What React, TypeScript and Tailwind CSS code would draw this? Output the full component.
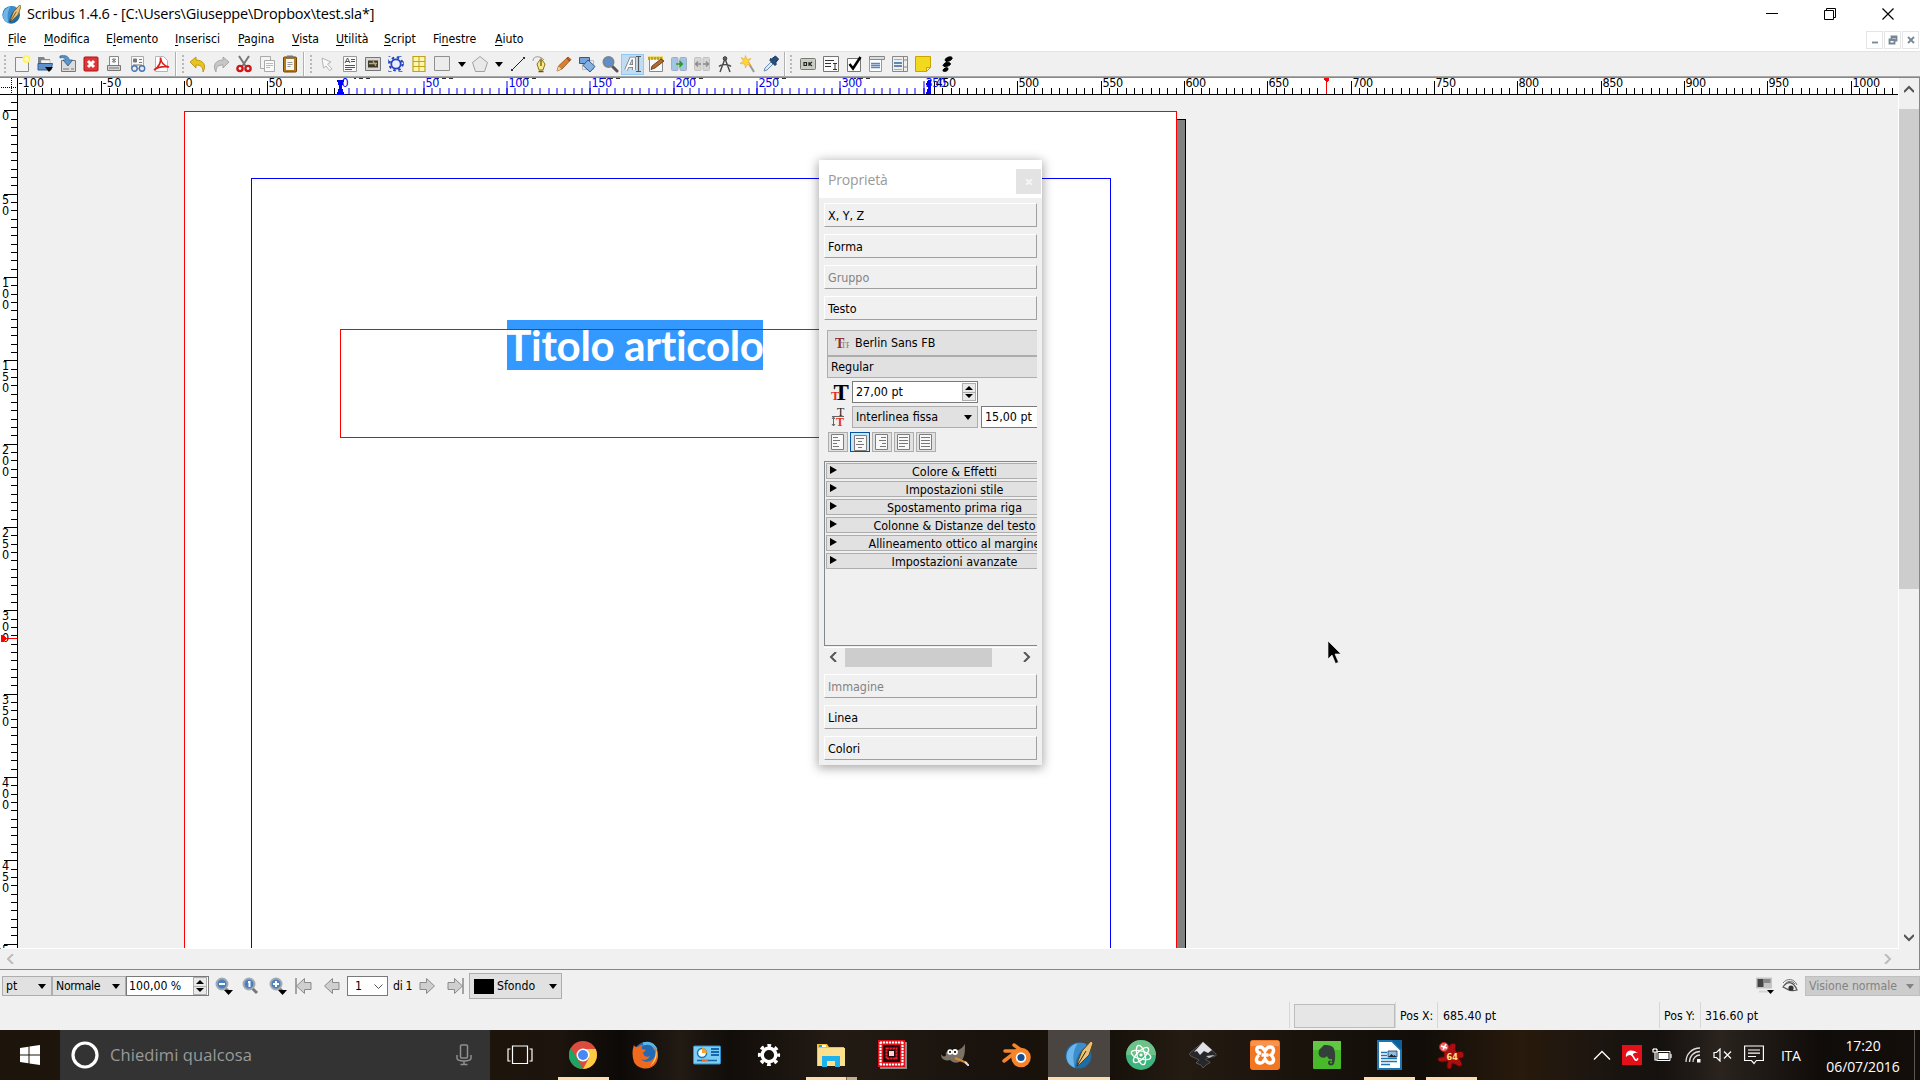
import React from "react";

type Kids = { children?: React.ReactNode };

const UI = "font-['DejaVu_Sans_Condensed','DejaVu_Sans',sans-serif] font-stretch-condensed";

function Ic({ children, w = 18, h = 18 }: Kids & { w?: number; h?: number }) {
  return (
    <svg width={w} height={h} viewBox={`0 0 ${w} ${h}`} fill="none" className="block shrink-0">
      {children}
    </svg>
  );
}

function Down({ className = "" }: { className?: string }) {
  return (
    <svg width="8" height="5" viewBox="0 0 8 5" className={`block shrink-0 ${className}`}>
      <path d="M0 0h8L4 5z" fill="currentColor" />
    </svg>
  );
}

function SpinButtons() {
  return (
    <div className="flex h-[18px] w-[14px] shrink-0 flex-col border border-[#adadad] bg-[#e9e9e9]">
      <div className="flex flex-1 items-center justify-center border-b border-[#adadad]">
        <Ic w={8} h={4}><path d="M0 4h8L4 0z" fill="#000" /></Ic>
      </div>
      <div className="flex flex-1 items-center justify-center">
        <Ic w={8} h={4}><path d="M0 0h8L4 4z" fill="#000" /></Ic>
      </div>
    </div>
  );
}

/* ---------- menu ---------- */
const menus: [string, string, string, string][] = [
  ["", "F", "ile", "w-[36px]"],
  ["", "M", "odifica", "w-[62px]"],
  ["E", "l", "emento", "w-[69px]"],
  ["", "I", "nserisci", "w-[63px]"],
  ["", "P", "agina", "w-[54px]"],
  ["", "V", "ista", "w-[44px]"],
  ["", "U", "tilità", "w-[48px]"],
  ["", "S", "cript", "w-[49px]"],
  ["Fi", "n", "estre", "w-[62px]"],
  ["", "A", "iuto", "w-[40px]"],
];

/* ---------- toolbar icons ---------- */
const fileIcons = [
  <Ic key="new"><path d="M2.5 2.5h13v14h-13z" fill="#f4f4f4" stroke="#8a8a8a" /><circle cx="13.500" cy="4" r="4" fill="#fff36b" /><circle cx="13.500" cy="4" r="2" fill="#fffbd0" /></Ic>,
  <Ic key="open"><path d="M2 2h6l1 2h5v10H2z" fill="#7d858c" /><path d="M5 5h9v5H5z" fill="#f5f5f5" stroke="#999" strokeWidth=".5" /><path d="M2 8.500h14.500l-1.500 6.500H2z" fill="#5f92cc" stroke="#2a5c99" /><path d="M9 12h8l-4 5z" fill="#000" /></Ic>,
  <Ic key="save"><path d="M2.500 5.500h14v11h-14z" fill="#dcdcdc" stroke="#777" /><path d="M1 1c5-1 9 0 9 4h3.500L9 11 4 5h2.500c0-2-2-3-5.500-2z" fill="#5e95c9" stroke="#2b5f94" strokeWidth=".8" /><path d="M4 14h6M12 14h3" stroke="#777" /></Ic>,
  <Ic key="close"><rect x="2" y="2" width="14" height="14" rx="1" fill="#e03535" stroke="#a81515" /><path d="M6 6l6 6M12 6l-6 6" stroke="#fff" strokeWidth="3" /></Ic>,
  <Ic key="print"><path d="M4.500 1.500h9v9h-9z" fill="#fafafa" stroke="#888" /><path d="M2.500 10.500h13v5h-13z" fill="#d4d4d4" stroke="#777" /><path d="M9 3v5M7 4l4 3M11 4L7 7M4 13h10" stroke="#777" /></Ic>,
  <Ic key="preflight"><path d="M2.500 1.500h12v12h-12z" fill="#f8f8f8" stroke="#aaa" /><path d="M4.500 4h3v3h-3zM10 4.500h3M10 7.500h3M4 10h9" stroke="#777" fill="#777" /><circle cx="5.500" cy="13.500" r="2.700" fill="#e3eefb" stroke="#4a74ad" strokeWidth="1.400" /><circle cx="13" cy="13.500" r="2.700" fill="#e3eefb" stroke="#4a74ad" strokeWidth="1.400" /></Ic>,
  <Ic key="pdf"><path d="M3.500 1.500h8l4 4v11h-12z" fill="#fff" stroke="#b5b5b5" /><path d="M2 15C7 12 9 7 8.500 2.500 9 8 12 11 17 12c-6-1-11 0-15 3z" stroke="#d9201a" strokeWidth="1.600" /></Ic>,
];
const editIcons = [
  <Ic key="undo"><path d="M1 7l6-5v3c7 0 11 5 7 12 0-5-2-7-7-7v3z" fill="#eac41d" stroke="#b08a00" strokeWidth=".8" /></Ic>,
  <Ic key="redo"><path d="M17 7l-6-5v3C4 5 0 10 4 17c0-5 2-7 7-7v3z" fill="#c6c6c6" stroke="#9a9a9a" strokeWidth=".8" /></Ic>,
  <Ic key="cut"><path d="M4 1l6.500 10M14 1L7.500 11" stroke="#777" strokeWidth="2" /><circle cx="5" cy="13.500" r="2.600" stroke="#cc1717" strokeWidth="2.400" /><circle cx="13" cy="13.500" r="2.600" stroke="#cc1717" strokeWidth="2.400" /></Ic>,
  <Ic key="copy"><path d="M2.500 1.500h10v12h-10z" fill="#f4f4f4" stroke="#aaa" /><path d="M6.500 5.500h10v11h-10z" fill="#fafafa" stroke="#aaa" /><path d="M8 8.500h7M8 10.500h7M8 12.500h4" stroke="#bbb" /></Ic>,
  <Ic key="paste"><rect x="2.500" y="2" width="13" height="15" rx="1" fill="#b3791c" stroke="#6b4509" /><path d="M5 4h8v11H5z" fill="#f6f6f2" /><path d="M6 .500h6v3H6z" fill="#777" /><path d="M6.500 7.500h5M6.500 9.500h5M6.500 11.500h3" stroke="#999" /></Ic>,
];
const toolIcons = [
  <Ic key="sel"><path d="M4 3l9 4-3.500 2 4.500 5-2.500 1.500L8 11l-2.500 2z" fill="#fafafa" stroke="#b5b5b5" /></Ic>,
  <Ic key="txt"><path d="M2.500 1.500h13v15h-13z" fill="#fafafa" stroke="#999" /><path d="M4 8l2.500-5L9 8M5 6.500h3M10 4.500h4M10 6.500h4M4 10.500h10M4 12.500h10M4 14.500h7" stroke="#555" /></Ic>,
  <Ic key="img"><path d="M1.500 2.500h15v13h-15z" fill="#d9d9d2" stroke="#777" /><path d="M4 5.500h10v7H4z" fill="#3d3a30" /><path d="M5 8.500h8M9 6l3 5" stroke="#c9a95c" strokeWidth="1.300" /></Ic>,
  <Ic key="render"><path d="M1.500 1.500h15v15h-15z" stroke="#5b72c9" strokeDasharray="4 7" strokeDashoffset="2" /><circle cx="9" cy="9" r="4.700" fill="#e8efff" stroke="#2743bd" strokeWidth="1.800" /><circle cx="9" cy="9" r="6.500" stroke="#2743bd" strokeWidth="2" strokeDasharray="2.500 2.600" /></Ic>,
  <Ic key="table"><path d="M3 1.500h12v15H3z" fill="#fff6b0" stroke="#c2a21a" strokeWidth="1.200" /><path d="M9 2v14M3 6.500h12M3 11.500h12" stroke="#c2a21a" /></Ic>,
  <Ic key="rect"><path d="M1.500 1.500h15v14h-15z" fill="#ececec" stroke="#909090" /></Ic>,
];
const toolIcons2 = [
  <Ic key="line"><path d="M3 15L15 3" stroke="#222" /><path d="M2 14h2v2H2zM14 2h2v2h-2z" fill="#333" /></Ic>,
  <Ic key="bez"><path d="M1 6c0-6 8-5 11-1" stroke="#999" /><path d="M9 3.500l4 5.500-2 6H7L5 9z" fill="#f7e88d" stroke="#8d7411" /><path d="M9 5v6M6.500 16.500h5" stroke="#6d5500" strokeWidth="1.300" /></Ic>,
  <Ic key="pencil"><path d="M2 16l1.500-5L13 2l3 2.500L7 14z" fill="#d9822b" stroke="#8d4c11" strokeWidth=".8" /><path d="M2 16l1.500-4.500L6.500 14z" fill="#f2d3a5" /><path d="M12 3l3 3" stroke="#aa3a3a" strokeWidth="1.500" /></Ic>,
  <Ic key="rot"><path d="M4.500 5.500h11v9h-11z" stroke="#bbb" /><path d="M1.500 2.500h10v6h-10z" fill="#75a4d8" stroke="#2c5a94" /><path d="M10 5l7 6.500-5 5.500-7-6.500z" fill="#86b1e1" stroke="#2c5a94" /></Ic>,
  <Ic key="zoom"><path d="M11 11l5 5" stroke="#555" strokeWidth="3" strokeLinecap="round" /><circle cx="7.500" cy="7" r="5" fill="#5c8fce" stroke="#7b8590" strokeWidth="2" /></Ic>,
];
const toolIcons3 = [
  <Ic key="story"><path d="M2.500 3.500h13v13h-13z" fill="#fafafa" stroke="#888" /><path d="M1 1.500h15v3H1z" fill="#e6cd28" /><path d="M2 2v3M5 2v3M8 2v3M11 2v3M14 2v3" stroke="#8d7a10" /><path d="M4 14.500l1-3.500 9-7 3 2-9 7z" fill="#b9692a" stroke="#503015" strokeWidth=".8" /></Ic>,
  <Ic key="link"><rect x="1.500" y="2.500" width="6.500" height="13" rx="1" fill="#a4c4e6" stroke="#9db0c2" /><rect x="10" y="2.500" width="6.500" height="13" rx="1" fill="#a4c4e6" stroke="#9db0c2" /><path d="M6 9h4M10 6.500L12.500 9 10 11.500z" stroke="#2f9a2b" strokeWidth="1.300" fill="#2f9a2b" /></Ic>,
  <Ic key="unlink"><rect x="1.500" y="2.500" width="6.500" height="13" rx="1" fill="#d6d6d6" stroke="#c2c2c2" /><rect x="10" y="2.500" width="6.500" height="13" rx="1" fill="#d6d6d6" stroke="#c2c2c2" /><path d="M3 9h5M10 9h5M5 6.500L2.500 9 5 11.500M13 6.500l2.500 2.500-2.500 2.500" stroke="#8a8a8a" strokeWidth="1.300" /></Ic>,
  <Ic key="compass"><circle cx="9" cy="3.500" r="1.800" fill="#666" stroke="#333" /><path d="M8.500 5L4 17M9.500 5L14 17M3 11.500c2-2.500 10-2.500 12 0" stroke="#444" strokeWidth="1.400" /></Ic>,
  <Ic key="wand"><path d="M9 7l6 10" stroke="#999" strokeWidth="2" /><path d="M6.500.500l1.500 4 4-1-3 3.500 3 3-4-.500L6.500 13 5.500 9 1 8.500 4.500 6 2 2.500 5.500 4z" fill="#ffd633" stroke="#e8a83c" strokeWidth=".6" /></Ic>,
  <Ic key="drop"><path d="M2 16l1-3 6-6 2 2-6 6z" fill="#dceafa" stroke="#6a8db5" /><path d="M8 5.500l5 5 1.500-1.500-1-1 3-4-3-3-4 3-1-.500z" fill="#23507f" stroke="#16324f" /></Ic>,
];
const pdfIcons = [
  <Ic key="ok"><rect x="1.500" y="3.500" width="15" height="11" rx="1" fill="#c9ccc5" stroke="#777b72" /><path d="M5 7.500h2.500v3H5zM10 7v4M13 7l-2.500 2L13 11" stroke="#222" strokeWidth="1.200" /></Ic>,
  <Ic key="field"><path d="M1.500 1.500h15v15h-15z" fill="#fbfbfb" stroke="#777" /><path d="M3 5.500h9M3 8.500h6M3 11.500h6M11 8.500h4M11 14.500h4M13 8.500v6" stroke="#333" /></Ic>,
  <Ic key="check"><path d="M2.500 3.500h13v13h-13z" fill="#fff" stroke="#777" /><path d="M4.500 9l3.500 4.500L15.500 2" stroke="#000" strokeWidth="2.500" /></Ic>,
  <Ic key="combo"><path d="M1.500 3.500h12v13h-12z" fill="#fff" stroke="#999" /><path d="M1.500 1.500h15v3h-15z" fill="#ddd" stroke="#888" /><path d="M3 8.500h9M3 10.500h9M3 12.500h9" stroke="#5f87bb" strokeWidth="1.500" /></Ic>,
  <Ic key="list"><path d="M1.500 1.500h15v15h-15z" fill="#eee" stroke="#888" /><path d="M12.500 1.500v15M13 5h4M13 12h4" stroke="#888" /><path d="M3 4.500h8M3 14.500h8" stroke="#aaa" /><path d="M3 8h8M3 11h8" stroke="#5f87bb" strokeWidth="2" /></Ic>,
  <Ic key="note"><path d="M1.500 1.500h15v11l-4 4h-11z" fill="#f2d91d" stroke="#c9a300" /><path d="M12.500 16.500v-4h4z" fill="#fff08a" stroke="#c9a300" /></Ic>,
  <Ic key="feet"><path d="M7 5c1-3 6-4 7-2.500s-2 4-6 4zM5 10.500c1-3 5-4 7-2.500s-2 4-6 3.500zM5 15c2-3 5-3 5-1s-3 3-5 2z" fill="#000" stroke="#000" /></Ic>,
];

function Slots({ icons, className = "" }: { icons: React.ReactNode[]; className?: string }) {
  return (
    <div className={`flex shrink-0 ${className}`}>
      {icons.map((ic, i) => (
        <div key={i} className="flex h-6 w-[23.1px] shrink-0 items-center justify-center">{ic}</div>
      ))}
    </div>
  );
}

function Handle() {
  return (
    <div className="flex w-[6px] shrink-0 flex-col items-center gap-[2px]">
      {[0, 1, 2, 3, 4].map((i) => <span key={i} className="size-[2px] bg-[#b8b8b8]" />)}
    </div>
  );
}

function Sep() {
  return <div className="h-6 w-[2px] shrink-0 border-l border-[#b0b0b0] bg-white" />;
}

function Toolbar() {
  return (
    <div className="flex h-[25px] items-center border-t border-[#e3e3e3] bg-[#f0f0f0] pl-[2px]">
      <Handle />
      <Slots icons={fileIcons} className="ml-[2.5px] w-[164px]" />
      <Sep />
      <div className="ml-[3px]"><Handle /></div>
      <Slots icons={editIcons} className="ml-[1px] w-[116.500px]" />
      <Sep />
      <div className="ml-[3px]"><Handle /></div>
      <Slots icons={toolIcons} className="ml-[1px] w-[142px]" />
      <Down className="ml-[1px]" />
      <div className="ml-[5px]">
        <Ic><path d="M9 1.500l7.500 6-3 9h-9l-3-9z" fill="#e9e9e9" stroke="#a0a0a0" /></Ic>
      </div>
      <Down className="ml-[6px]" />
      <Slots icons={toolIcons2} className="ml-[3px]" />
      <div className="flex h-[21px] w-[23px] shrink-0 items-center justify-center border border-[#90c8f6] bg-[#c0dcf3]">
        <Ic><path d="M2 15L7 3.500h3V15M4.500 11H9" stroke="#777" strokeWidth="3.500" /><path d="M2 15L7 3.500h3V15M4.500 11H9" stroke="#f8f8f8" strokeWidth="2" /><path d="M12 1.500h5M14.500 2v14M12 16.500h5" stroke="#555" strokeWidth="1.200" /></Ic>
      </div>
      <Slots icons={toolIcons3} className="w-[139.500px]" />
      <Sep />
      <div className="ml-[2px]"><Handle /></div>
      <Slots icons={pdfIcons} className="ml-[2.5px]" />
    </div>
  );
}

/* ---------- rulers ---------- */
const K = 5 / 3;
const range = (a: number, b: number, s: number) => {
  const r: number[] = [];
  for (let v = a; v <= b; v += s) r.push(v);
  return r;
};

function HRuler() {
  const x = (v: number) => Math.floor(184.4 + v * K);
  const bx = (v: number) => Math.floor(339.7 + v * K);
  const black = range(-100, 1025, 5).filter((v) => x(v) < 338 || x(v) > 930);
  return (
    <svg width="1899" height="17" viewBox="0 78 1899 17" className={`block bg-white ${UI}`} fontSize="12.500" shapeRendering="crispEdges">
      <path d="M1 87.500h16M11.500 78v16" stroke="#000" strokeDasharray="1 1" />
      <path d="M17.500 78v17M0 94.500h1898" stroke="#000" />
      {black.map((v) => (
        <rect key={v} x={x(v)} y={v % 50 ? 88 : 81} width="1" height={v % 50 ? 6 : 13} fill="#000" />
      ))}
      {black.filter((v) => v % 50 === 0).map((v) => (
        <text key={v} x={x(v) + 1.5} y="87" fill="#000" textLength={String(v).replace("-", "").length * 6.900 + (v < 0 ? 5 : 0)}>{v}</text>
      ))}
      {range(100, 400, 50).map((v) => (
        <path key={v} d={`M${x(v) + 3} 78.500h2m3 0h4m3 0h4`} stroke="#333" />
      ))}
      {range(5, 350, 5).map((v) => (
        <g key={v} fill="#8080ff">
          <rect x={bx(v)} y={v % 50 ? 88 : 81} width="2" height={v % 50 ? 6 : 13} />
          {v % 50 === 0 && <rect x={bx(v)} y="88" width="2" height="6" fill="#3838ff" />}
        </g>
      ))}
      {range(0, 350, 50).map((v) => (
        <text key={v} x={bx(v) + 2.5} y="87" fill="#0000ee" textLength={String(v).length * 6.900}>{v}</text>
      ))}
      <path d="M337 80h7l-3 7 3 7h-7l3-7z" fill="#0000ff" stroke="#0000ff" />
      <path d="M931 80h-3l-2 4 2 4-2 6h5z" fill="#0000ff" />
      <path d="M1324 78h5v2l-2 2v12h-1v-12l-2-2z" fill="#f00" />
    </svg>
  );
}

function VRuler() {
  const y = (v: number) => Math.floor(110.700 + v * K);
  return (
    <svg width="18" height="853" viewBox="0 95 18 853" className={`block shrink-0 bg-white ${UI}`} fontSize="12.500" shapeRendering="crispEdges">
      <path d="M17.500 95v854" stroke="#000" />
      {range(-5, 500, 5).map((v) => (
        <rect key={v} x={v % 50 ? 11 : 4} y={y(v)} width={v % 50 ? 6 : 13} height="1" fill="#000" />
      ))}
      {range(0, 500, 50).map((v) =>
        String(v).split("").map((d, i) => (
          <text key={`${v}-${i}`} x="2" y={y(v) + 9.500 + i * 11} textLength="7">{d}</text>
        ))
      )}
      <path d="M1 635h2l3 3h11v1H6l-3 3H1z" fill="#f00" />
    </svg>
  );
}

/* ---------- document canvas ---------- */
function Canvas() {
  return (
    <div className="relative h-[853px] w-[1880px] overflow-hidden bg-[#f0f0f0]">
      <div className="absolute left-[1158px] top-[24px] h-[840px] w-[10px] border border-black bg-[#808080]" />
      <div className="absolute left-[166px] top-[16px] h-[850px] w-[993px] border border-[#ff0000] bg-white" />
      <div className="absolute left-[233px] top-[83px] h-[800px] w-[860px] border border-[#0000ff]" />
      <div className="absolute left-[489px] top-[225px] flex h-[50px] w-[256px] items-center justify-center whitespace-nowrap bg-[#3399ff] font-['Lato',sans-serif] text-[42px] font-bold text-white">
        <span className="tracking-[-0.3px]">Titolo articolo</span>
      </div>
      <div className="absolute left-[322px] top-[234px] h-[109px] w-[600px] border border-[#ff0000]" />
      <svg width="14" height="24" viewBox="0 0 14 24" className="absolute left-[1310px] top-[546px]">
        <path d="M0 0v18l4-4 3.500 8.500 3-1.200L7 13h6z" fill="#000" stroke="#fff" strokeWidth=".6" />
      </svg>
    </div>
  );
}

/* ---------- properties palette ---------- */
function Section({ children, off = false, className = "" }: Kids & { off?: boolean; className?: string }) {
  return (
    <div className={`flex h-6 items-center border border-b-[#a0a0a0] border-l-white border-r-[#a0a0a0] border-t-white pl-[3px] pt-[2px] ${off ? "text-[#838383]" : ""} ${className}`}>
      {children}
    </div>
  );
}

const alignLines = [
  "M5 5.500h5M5 8.500h7M5 11.500h4M5 14.500h6",
  "M6 6.500h8M8 9.500h4M6 12.500h8M8 15.500h4",
  "M9 5.500h5M7 8.500h7M10 11.500h4M8 14.500h6",
  "M5 5.500h9M5 8.500h9M5 11.500h9M5 14.500h6",
  "M5 5.500h9M5 8.500h9M5 11.500h9M5 14.500h9",
];

function Palette() {
  return (
    <div className={`absolute left-[819px] top-[160px] flex h-[605px] w-[223px] flex-col bg-[#f0f0f0] pb-[4px] text-[12.4px] text-black shadow-[0_2px_10px_1px_rgba(0,0,0,0.35)] ${UI}`}>
      <div className="flex h-[38px] shrink-0 justify-between bg-white pl-[9px] pr-px pt-[9px] font-['Open_Sans',sans-serif] text-[14px] font-stretch-normal text-[#999]">
        <span className="tracking-[-0.15px]">Proprietà</span>
        <span className="flex h-[25px] w-[25px] items-center justify-center bg-[#e3e3e3]">
          <Ic w={8} h={6}><path d="M1 0l6 6M7 0L1 6" stroke="#f7f7f7" strokeWidth="1.800" /></Ic>
        </span>
      </div>
      <div className="flex flex-col gap-[7px] pl-[5px] pr-[5px] pt-[5px]">
        <Section>X, Y, Z</Section>
        <Section>Forma</Section>
        <Section off>Gruppo</Section>
        <Section>Testo</Section>
      </div>
      <div className="mr-[5px] mt-[10px] flex h-[123px] shrink-0 flex-col overflow-hidden pl-[8px]">
        <div className="flex h-[26px] shrink-0 items-center border border-r-0 border-[#adadad] bg-[#e1e1e1] pl-[7px]">
          <Ic w={14} h={14}>
            <text x="0" y="12" fontSize="14" fill="#8d3030" className="font-['Liberation_Serif',serif] font-bold">T</text>
            <text x="6" y="12" fontSize="8" fill="#777" className="font-['Liberation_Serif',serif]">TF</text>
          </Ic>
          <span className="ml-[6px] pt-px">Berlin Sans FB</span>
        </div>
        <div className="flex h-[22px] shrink-0 items-center border border-r-0 border-[#adadad] bg-[#e1e1e1] pl-[3px] pt-px">Regular</div>
        <div className="mt-[3px] flex h-[22px] shrink-0 items-center">
          <div className="flex w-[25px] justify-center">
            <Ic w={20} h={20}>
              <text x="3.500" y="18" fontSize="23" fill="#000" className="font-['Liberation_Serif',serif] font-bold">T</text>
              <text x="1" y="18" fontSize="13" fill="#e5301c" className="font-['Liberation_Serif',serif] font-bold">T</text>
            </Ic>
          </div>
          <div className="flex h-[22px] w-[126px] items-center justify-between border border-[#7a7a7a] bg-white pl-[3px] pr-px">
            <span className="pt-px">27,00 pt</span><SpinButtons />
          </div>
        </div>
        <div className="mt-[3px] flex h-[22px] shrink-0 items-center">
          <div className="flex w-[25px] justify-center">
            <Ic w={18} h={20}>
              <path d="M1 9.500h12M2.500 10v9M1 12l1.500-2L4 12M1 17l1.500 2L4 17" stroke="#666" />
              <text x="6" y="9" fontSize="12" fill="#222" className="font-['Liberation_Serif',serif]">T</text>
              <text x="5" y="19" fontSize="12" fill="#e5301c" className="font-['Liberation_Serif',serif] font-bold">T</text>
            </Ic>
          </div>
          <div className="flex h-[22px] w-[126px] items-center justify-between border border-[#adadad] bg-[#e1e1e1] pl-[3px] pr-[5px]">
            <span className="pt-px">Interlinea fissa</span><Down />
          </div>
          <div className="ml-[3px] flex h-[22px] w-[56px] shrink-0 items-center whitespace-nowrap border border-r-0 border-[#7a7a7a] bg-white pl-[3px] pt-px">15,00 pt</div>
        </div>
        <div className="ml-px mt-[4px] flex shrink-0 gap-[2px]">
          {alignLines.map((d, i) => (
            <div key={i} className={`h-5 w-5 border ${i === 1 ? "border-[#0054a0] bg-[#cce4f7]" : "border-[#adadad] bg-[#e1e1e1]"}`}>
              <svg width="18" height="18" viewBox="1 1 18 18">
                <path d={i === 1 ? "M4.500 3.500h12v15h-12z" : "M3.500 2.500h12v15h-12z"} fill="#f8f8f8" stroke="#7d7d7d" />
                <path d={d} stroke="#777" />
              </svg>
            </div>
          ))}
        </div>
      </div>
      <div className="ml-[5px] mr-[5px] mt-[8px] flex h-[185px] shrink-0 flex-col gap-[2px] overflow-hidden border border-r-0 border-[#828790] pl-px pt-px">
        {["Colore & Effetti", "Impostazioni stile", "Spostamento prima riga", "Colonne & Distanze del testo", "Allineamento ottico al margine", "Impostazioni avanzate"].map((t) => (
          <div key={t} className="flex h-4 w-[256px] shrink-0 items-center border border-[#adadad] bg-[#e1e1e1] pl-[3px]">
            <Ic w={7} h={10}><path d="M0 0l7 4-7 4z" fill="#000" /></Ic>
            <span className="flex w-[235px] justify-center whitespace-nowrap pt-[2px]">{t}</span>
          </div>
        ))}
      </div>
      <div className="ml-[5px] mr-[5px] mt-px flex h-[19px] shrink-0 items-center border-t border-white">
        <div className="flex w-[21px] justify-center pr-[3px]"><Ic w={8} h={10}><path d="M7 0L2 5l5 5" stroke="#555" strokeWidth="2" /></Ic></div>
        <div className="h-[19px] w-[147px] bg-[#cdcdcd]" />
        <div className="ml-[31px]"><Ic w={8} h={10}><path d="M1 0l5 5-5 5" stroke="#555" strokeWidth="2" /></Ic></div>
      </div>
      <div className="mt-[8px] flex flex-col gap-[7px] px-[5px]">
        <Section off>Immagine</Section>
        <Section>Linea</Section>
        <Section>Colori</Section>
      </div>
    </div>
  );
}

/* ---------- status bar ---------- */
function Lens({ mark, arrow }: { mark: string; arrow?: boolean }) {
  return (
    <Ic w={18} h={18}>
      <path d="M10 11l5 5" stroke="#777" strokeWidth="3" />
      <circle cx="7" cy="7" r="5.500" fill="#4a7fc0" stroke="#a2aab2" strokeWidth="2" />
      <path d={mark} stroke="#fff" strokeWidth="2" />
      {arrow && <path d="M9 13h9l-4.500 5z" fill="#000" />}
    </Ic>
  );
}

function PageArrow({ flip, bar }: { flip?: boolean; bar?: boolean }) {
  return (
    <svg width="17" height="18" viewBox="0 0 17 18" className={`block shrink-0 ${flip ? "-scale-x-100" : ""}`}>
      <path d="M1.500 9l8-7.500v4h6.500v7H9.500v4z" fill="#cfcfcf" stroke="#8a8a8a" />
      {bar && <path d="M1 1v16" stroke="#8a8a8a" strokeWidth="1.500" />}
    </svg>
  );
}

function StatusBar() {
  return (
    <div className={`flex h-[60px] flex-col bg-[#f0f0f0] text-[12.2px] text-black ${UI}`}>
      <div className="flex h-[32px] items-center pl-[2px]">
        <div className="flex h-5 w-[50px] items-center justify-between border border-[#adadad] bg-[#e1e1e1] pl-[3px] pr-[5px]"><span className="pt-px">pt</span><Down /></div>
        <div className="flex h-5 w-[74px] items-center justify-between border border-[#adadad] bg-[#e1e1e1] pl-[3px] pr-[5px]"><span className="pt-px tracking-[-0.3px]">Normale</span><Down /></div>
        <div className="flex h-5 w-[83px] items-center justify-between border border-[#7a7a7a] bg-white pl-[2px] pr-px"><span className="pt-px">100,00 %</span><SpinButtons /></div>
        <div className="ml-[6px]"><Lens mark="M4 7h6" arrow /></div>
        <div className="ml-[9px]"><Lens mark="M7.500 4v6M6 5h2" /></div>
        <div className="ml-[9px]"><Lens mark="M4 7h6M7 4v6" arrow /></div>
        <div className="ml-[8px]"><PageArrow bar /></div>
        <div className="ml-[11px]"><PageArrow /></div>
        <div className="ml-[7px] flex h-5 w-[41px] items-center justify-between border border-[#7a7a7a] bg-white pl-[7px] pr-[4px]">
          <span className="pt-px">1</span><Ic w={9} h={5}><path d="M.5.500l4 4 4-4" stroke="#555" /></Ic>
        </div>
        <span className="ml-[5px] w-[20px] whitespace-nowrap pt-px tracking-[-0.3px]">di 1</span>
        <div className="ml-[6px]"><PageArrow flip /></div>
        <div className="ml-[11px]"><PageArrow flip bar /></div>
        <div className="ml-[5px] flex h-[26px] w-[93px] items-center border border-[#adadad] bg-[#e1e1e1] pl-[4px]">
          <span className="mr-[3px] h-[15px] w-[20px] bg-black" /><span className="pt-px">Sfondo</span><Down className="ml-auto mr-[4px]" />
        </div>
        <div className="ml-auto mr-[7px]">
          <Ic w={19} h={18}><path d="M0 .5h16v11H0z" fill="#c4c4c4" /><path d="M1.500 2h6v8h-6z" fill="#444" /><path d="M7.500 2h7v4h-7z" fill="#888" /><path d="M3 14.500h9" stroke="#d5d5d5" strokeWidth="2" /><path d="M11 13h7l-3.500 4z" fill="#000" /></Ic>
        </div>
        <div className="mr-[6px]">
          <Ic w={17} h={16}><path d="M1 9c5-7 11-5 14 3-4 1-8 1-12-2z" fill="#eee" stroke="#555" strokeWidth="1.200" /><circle cx="9" cy="10" r="2.600" fill="#333" /><path d="M1 5C5 0 12 0 15 7M3 6c3-4 8-3 10 0" stroke="#777" /></Ic>
        </div>
        <div className="flex h-5 w-[115px] items-center justify-between border border-[#bfbfbf] bg-[#cccccc] pl-[3px] pr-[5px] text-[#838383]"><span className="pt-px">Visione normale</span><Down /></div>
      </div>
      <div className="flex h-[26px] items-center pl-[1289px]">
        <div className="h-full w-[5px] shrink-0 border-l border-[#d7d7d7]" />
        <div className="mt-[2px] h-[24px] w-[101px] shrink-0 border border-[#bcbcbc] bg-[#e6e6e6]" />
        <div className="flex h-full w-[42px] items-center whitespace-nowrap border-l border-[#d7d7d7] pl-[4px] pt-[3px]">Pos X:</div>
        <div className="flex h-full w-[222px] items-center border-l border-[#d7d7d7] pl-[5px] pt-[3px]">685.40 pt</div>
        <div className="flex h-full w-[41px] items-center whitespace-nowrap border-l border-[#d7d7d7] pl-[4px] pt-[3px]">Pos Y:</div>
        <div className="flex h-full items-center border-l border-[#d7d7d7] pl-[4px] pt-[3px]">316.60 pt</div>
      </div>
    </div>
  );
}

/* ---------- taskbar ---------- */
const Chrome = (
  <Ic w={28} h={28}>
    <circle cx="14" cy="14" r="14" fill="#dd4b3e" />
    <path d="M1.800 7L9 19l5 9A14 14 0 0 1 1.800 7z" fill="#1da362" />
    <path d="M14 8h12.600A14 14 0 0 1 14 28l6-11z" fill="#ffcd42" />
    <circle cx="14" cy="14" r="6.500" fill="#fff" /><circle cx="14" cy="14" r="5" fill="#4688f4" />
  </Ic>
);
const Firefox = (
  <Ic w={28} h={28}>
    <circle cx="15" cy="13" r="12" fill="#2469b3" /><path d="M12 3c6-2 11 0 13 6" stroke="#59b7e8" strokeWidth="3" />
    <path d="M3 4c1 2 2 2 4 2 2-2 4-2 5-2-1 2-2 3-1 4l4 1-3 3 1 2c1 2 4 2 6 1-2 4-6 5-9 3 3 4 11 4 14-3 1-4 0-8-3-11 6 4 8 11 4 18-5 8-18 7-22-1C1 15 1 9 3 4z" fill="#ee6a1f" />
    <path d="M25 8c2 6 0 13-6 17 5-6 6-11 6-17z" fill="#ffd35c" />
  </Ic>
);
const Card = (
  <Ic w={28} h={20}>
    <rect x=".5" y="1" width="27" height="18" rx="1" fill="#7dcdf5" stroke="#2d8fc9" />
    <circle cx="9" cy="8" r="4.500" fill="#fff" stroke="#1e78b9" strokeWidth="1.500" /><path d="M9 8V3a5 5 0 0 1 5 5z" fill="#f5a623" />
    <path d="M18 4h8M18 7h8M18 10h8" stroke="#1668ab" strokeWidth="2" /><path d="M4 15.500h20" stroke="#1668ab" strokeWidth="1.500" /><path d="M9 15.500h6" stroke="#f07020" strokeWidth="1.500" />
  </Ic>
);
const Gear = (
  <Ic w={24} h={24}>
    <circle cx="12" cy="12" r="6.800" stroke="#fff" strokeWidth="3.400" />
    <circle cx="12" cy="12" r="9.600" stroke="#fff" strokeWidth="3" strokeDasharray="3.770 3.770" strokeDashoffset="1.900" />
  </Ic>
);
const Folder = (
  <Ic w={28} h={26}>
    <path d="M0 2h10l2 3h15v19H0z" fill="#f0bf3f" /><path d="M1 6h27v18H1z" fill="#fde08d" /><path d="M2 3h7v2H2z" fill="#fff" /><path d="M2 3h3v2H2z" fill="#1d9be0" />
    <path d="M5 25V14h18v11h-5v-6h-8v6z" fill="#1db2ee" />
  </Ic>
);
const RedGrid = (
  <Ic w={29} h={29}>
    <path d="M2 2h27v27H2z" fill="#888" /><path d="M0 0h27v27H0z" fill="#e0101a" />
    <path d="M2 2.500h23M2 24.500h23M2.500 2v23M24.500 2v23" stroke="#fff" strokeWidth="2.200" strokeDasharray="2.200 .8" />
    <path d="M5 5h17v17H5z" fill="#25060a" /><path d="M8.500 8.500h10v10h-10z" stroke="#f3242c" strokeWidth="2" strokeDasharray="2.300 .7" /><path d="M11 11h5v5h-5z" fill="#ffd2d2" />
  </Ic>
);
const Gimp = (
  <Ic w={28} h={22}>
    <path d="M3 10c4-3 6-3 9-3 4 0 8-1 12-7 0 7 0 12-3 16-4 4-9 3-12 0-3 1-7 0-8-2-2-3 0-4 2-4z" fill="#7b7265" />
    <circle cx="9" cy="8" r="2.700" fill="#fff" /><circle cx="14" cy="8" r="2.900" fill="#fff" /><circle cx="9" cy="8" r="1" fill="#000" /><circle cx="14" cy="8" r="1.100" fill="#000" />
    <circle cx="3" cy="10.500" r="2" fill="#111" /><path d="M14 14l12 5" stroke="#d9892e" strokeWidth="2" /><path d="M24 18l4 4" stroke="#ddd" strokeWidth="2" />
  </Ic>
);
const Blender = (
  <Ic w={30} h={26}>
    <path d="M2 19L15 9M3 9h14M12 3l11 8" stroke="#f5842a" strokeWidth="3.500" strokeLinecap="round" />
    <circle cx="19" cy="15.500" r="7.500" fill="#fff" stroke="#f5842a" strokeWidth="4.500" /><circle cx="19" cy="15.500" r="3.600" fill="#164f91" />
  </Ic>
);

function ScribusIcon({ size }: { size: number }) {
  return (
    <svg width={size} height={size} viewBox="0 0 28 28" className="block shrink-0" fill="none">
      <circle cx="13.500" cy="14.500" r="13" fill="#1c6ca8" /><path d="M13 2C4 4 0 12 2 19c1 4 4 6 8 8-2-8-1-17 3-25z" fill="#6fb5ea" />
      <path d="M13 2c6-1 9 1 9 3-8 5-11 12-12 22C7 17 8 9 13 2z" fill="#3b8dcc" />
      <path d="M26 0l2 2-4 12-9 9-3 2 1-5 4-10z" fill="#e9c27a" stroke="#614313" strokeWidth="1" /><path d="M12 25l9-15" stroke="#3a2a10" />
    </svg>
  );
}

const Atom = (
  <Ic w={30} h={30}>
    <circle cx="15" cy="15" r="15" fill="#3fb57e" /><path d="M0 15a15 15 0 0 1 30 0z" fill="#8acb90" opacity=".6" />
    <g stroke="#fff" strokeWidth="1.300"><ellipse cx="15" cy="15" rx="10" ry="4" transform="rotate(15 15 15)" /><ellipse cx="15" cy="15" rx="10" ry="4" transform="rotate(75 15 15)" /><ellipse cx="15" cy="15" rx="10" ry="4" transform="rotate(135 15 15)" /></g>
    <circle cx="15" cy="15" r="1.600" fill="#fff" />
  </Ic>
);
const Inkscape = (
  <Ic w={28} h={28}>
    <path d="M14 1l13 12c1 2-2 3-5 3l-5 2c-2 1 3 2 4 3s-3 2-4 3l-3 3-2-3-5-2 3-3-8-4c-2-1-2-2-1-3z" fill="#25272b" stroke="#777" strokeWidth=".6" />
    <path d="M14 1l9 8-4 3-4-2-4 4-3-4-3 1z" fill="#dfe1e6" /><path d="M17 15l9-1-6 3z" fill="#c4c7cd" />
  </Ic>
);
const Xampp = (
  <Ic w={30} h={30}>
    <rect width="30" height="30" rx="3" fill="#f37623" /><path d="M1 1h28v5H1z" fill="#f9a870" opacity=".6" />
    <path d="M11 13.500C5 12 6 7 10 7c3 0 4 2 5 4 1-2 2-4 5-4 4 0 5 5 1 8 4 3 3 8-1 8-3 0-4-2-5-4-1 2-2 4-5 4-4 0-5-5-1-8M11.500 15h7" stroke="#fff" strokeWidth="3.400" />
  </Ic>
);
const Evernote = (
  <Ic w={28} h={28}>
    <rect width="28" height="28" rx="1" fill="#48b928" /><path d="M0 0h28v9H0z" fill="#74d154" opacity=".6" />
    <path d="M6 9l5-5c6 0 9 1 10 4 2 5 1 12 0 15-1 2-6 2-6-1s2-3 4-2v-2c-3 1-4-1-5-3-2 3-7 2-8-1-1-2 0-4 0-5z" fill="#34403a" /><path d="M17 21.500h2" stroke="#48b928" strokeWidth="1.500" />
  </Ic>
);
const Writer = (
  <Ic w={26} h={30}>
    <path d="M2 1h14l9 9v19H2z" fill="#fff" stroke="#1b75b5" strokeWidth="2" /><path d="M16 0h10v10z" fill="#0f6099" />
    <path d="M5 12.500h6M5 15.500h6M5 18.500h16M5 21.500h16M5 24.500h9" stroke="#1b75b5" strokeWidth="1.600" /><path d="M12 11h9v6h-9z" fill="#8fbfe0" stroke="#234" strokeWidth=".8" /><path d="M12.500 17l3-3 2 2 1-1 2 2z" fill="#222" />
  </Ic>
);
const Puzzle = (
  <Ic w={28} h={28}>
    <path d="M7 11c1-4 4-2 5-5 0-4 7-5 7-1-1 3-1 5 1 6 3-1 7-1 7 3s-4 3-5 3c1 3 5 6 2 8s-5-3-9-2c0 2 0 5-3 5s-2-5-1-8c-3 1-9 2-10-1s4-3 6-3z" fill="#a90e10" stroke="#5a0506" />
    <circle cx="7" cy="6" r="4.500" fill="#e66" stroke="#b22" /><path d="M4 5l6 2M9 3L6 9" stroke="#fff" strokeWidth="1.500" />
    <text x="9.500" y="19" fontSize="9" fill="#ffe37a" className="font-['DejaVu_Sans_Condensed',sans-serif] font-bold">64</text>
  </Ic>
);

const apps: { icon: React.ReactNode; open?: boolean; active?: boolean; multi?: boolean }[] = [
  { icon: Chrome, open: true }, { icon: Firefox }, { icon: Card }, { icon: Gear }, { icon: Folder, open: true, multi: true },
  { icon: RedGrid }, { icon: Gimp }, { icon: Blender }, { icon: <ScribusIcon size={28} />, open: true, active: true },
  { icon: Atom }, { icon: Inkscape }, { icon: Xampp }, { icon: Evernote }, { icon: Writer, open: true }, { icon: Puzzle, open: true },
];

function Taskbar() {
  return (
    <div className="flex h-[50px] bg-[linear-gradient(90deg,#1d150b_0px,#1d150b_490px,#1c140d_560px,#0c0907_620px,#221a13_680px,#110d09_730px,#231b14_830px,#1a130d_980px,#16110a_1110px,#241b12_1180px,#1a130c_1300px,#120d09_1420px,#281a0c_1520px,#1c1510_1600px,#15110e_1660px,#2a231e_1720px,#100c09_1820px,#130e0a_1920px)] font-['Open_Sans',sans-serif] text-white">
      <div className="flex w-[60px] items-center justify-center">
        <Ic w={20} h={20}><path d="M0 3l8.500-1.300v7.800H0zM9.500 1.500L20 0v9.500H9.500zM0 10.500h8.500v7.800L0 17zM9.500 10.500H20V20L9.500 18.500z" fill="#fff" /></Ic>
      </div>
      <div className="flex w-[430px] items-center bg-[#333333] pl-[11px] pr-[18px]">
        <Ic w={28} h={28}><circle cx="14" cy="14" r="12" stroke="#fff" strokeWidth="3.200" /></Ic>
        <span className="ml-[11px] pt-px text-[16.500px] tracking-[0.1px] text-[#9a9a9a]">Chiedimi qualcosa</span>
        <svg width="16" height="22" viewBox="0 0 16 22" fill="none" stroke="#8f8f8f" strokeWidth="1.500" className="ml-auto">
          <rect x="4.500" y="1" width="7" height="13" rx="1" /><path d="M1 11v3c0 4 14 4 14 0v-3M8 17v3.500M4.500 20.500h7" />
        </svg>
      </div>
      <div className="flex w-[62px] items-center justify-center pr-[2px]">
        <Ic w={26} h={20}><path d="M5.500 1h15v17.500h-15zM3.500 4H1v12h2.500M22.500 4H25v12h-2.500" stroke="#fff" strokeWidth="1.200" /></Ic>
      </div>
      {apps.map((a, i) => (
        <div key={i} className={`flex w-[62px] shrink-0 flex-col items-center ${a.active ? "bg-[#4b4541]" : ""}`}>
          <div className="flex h-[47px] items-center pr-px pt-[2px]">{a.icon}</div>
          {a.open && (
            <div className={`flex h-[3px] bg-[#ffdcae] ${a.active ? "w-full" : "w-[51px]"}`}>
              {a.multi && <span className="ml-auto w-[11px] border-l border-[#7a6a55] bg-[#c9ad8a]" />}
            </div>
          )}
        </div>
      ))}
      <div className="ml-auto flex items-center">
        <Ic w={18} h={10}><path d="M1 9.500l8-8 8 8" stroke="#fff" strokeWidth="1.300" /></Ic>
        <div className="ml-[11px]"><Ic w={20} h={20}><path d="M0 0h20v20H0z" fill="#e3101a" /><path d="M4 12C3 6 9 3 16 8c-3-1-5 0-6 3-2-2-4-1-6 1z" fill="#fff" /><path d="M9.500 9l3.500 5.500c1 1.500 3 .5 2.500-1.500" stroke="#fff" strokeWidth="1.500" /></Ic></div>
        <div className="ml-[10px]"><Ic w={20} h={14}><path d="M5 3.500h13v9H5z" stroke="#fff" /><path d="M6.500 5h10v6h-10z" fill="#fff" /><path d="M19 6v4M1 1v3h4V1M2 0v2M4 0v2M3 4v8h2" stroke="#fff" strokeWidth="1.200" /></Ic></div>
        <div className="ml-[13px]"><Ic w={16} h={16}><path d="M1 15C1 7 7 1 15 1M4.500 15C4.500 9 9 4.500 15 4.500M8 15c0-4 3-7 7-7" stroke="#ddd" strokeWidth="1.300" /><path d="M12 12h3.500v3.500H12z" fill="#fff" /></Ic></div>
        <div className="ml-[12px]"><Ic w={19} h={14}><path d="M1 4.500h2.500L7 1v12L3.500 9.500H1z" stroke="#fff" strokeWidth="1.200" /><path d="M11 3.500l7 7M18 3.500l-7 7" stroke="#fff" strokeWidth="1.200" /></Ic></div>
        <div className="ml-[12px]"><Ic w={20} h={20}><path d="M.6 1h18.800v14.500h-7L10 18.500 7.500 15.500H.6z" stroke="#fff" strokeWidth="1.200" /><path d="M4 5h12M4 8.200h12M4 11.500h8" stroke="#fff" strokeWidth="1.200" /></Ic></div>
        <span className="ml-[17px] w-[22px] pt-px text-[14px] tracking-[-0.3px]">ITA</span>
        <div className="ml-[20px] flex w-[80px] flex-col items-center whitespace-nowrap pt-[2px] text-[14px] leading-[21px] tracking-[-0.1px]">
          <span>17:20</span><span>06/07/2016</span>
        </div>
        <span className="ml-[11px] mr-[5px] h-[50px] w-px bg-[#5a5550]" />
      </div>
    </div>
  );
}

export default function App() {
  return (
    <div className="relative flex h-[1080px] w-[1920px] flex-col overflow-hidden bg-white text-black">
      <div className="flex h-[28px] items-center pl-[2px] font-['Open_Sans',sans-serif]">
        <ScribusIcon size={19} />
        <span className="ml-[6px] whitespace-nowrap text-[14.5px] tracking-[-0.22px]">Scribus 1.4.6 - [C:\Users\Giuseppe\Dropbox\test.sla*]</span>
        <div className="ml-auto mr-[26px] flex items-center gap-[46px]">
          <Ic w={12} h={12}><path d="M0 5.500h12" stroke="#000" /></Ic>
          <Ic w={12} h={12}><path d="M.5 2.500h9v9h-9zM2.500 2V.500h9v9H10" stroke="#000" /></Ic>
          <Ic w={12} h={12}><path d="M.5.500l11 11M11.500.500l-11 11" stroke="#000" strokeWidth="1.200" /></Ic>
        </div>
      </div>
      <div className={`flex h-[23px] items-center pl-[8px] text-[12.2px] ${UI}`}>
        {menus.map(([a, b, c, w]) => (
          <span key={b + c} className={`${w} whitespace-nowrap`}>{a}<u className="underline-offset-2">{b}</u>{c}</span>
        ))}
        <div className="ml-auto mr-px flex gap-[1px]">
          {["M5 10.500h6", "M4.500 7.500h5v4h-5zM6.500 7V4.500h5v4H10M4 8h6M6 5h6", "M5 5l6 6M11 5l-6 6"].map((d) => (
            <div key={d} className="h-[18px] w-[17px] border border-[#e5e5e5]">
              <Ic w={15} h={16}><path d={d} stroke="#768696" strokeWidth="1.800" /></Ic>
            </div>
          ))}
        </div>
      </div>
      <Toolbar />
      <div className="h-[2px] shrink-0 border-b border-[#828790] bg-[#a8a8a8]" />
      <div className="flex h-[892px] border-b border-l border-r border-[#828790]">
        <div className="-ml-px flex w-[1899px] shrink-0 flex-col">
          <HRuler />
          <div className="flex"><VRuler /><Canvas /></div>
          <div className="mt-px flex h-[20px] items-center justify-between bg-[#f0f0f0] pb-px pl-[6px] pr-[7px]">
            <Ic w={8} h={10}><path d="M7 0L2 5l5 5" stroke="#bbb" strokeWidth="2" /></Ic>
            <Ic w={8} h={10}><path d="M1 0l5 5-5 5" stroke="#bbb" strokeWidth="2" /></Ic>
          </div>
        </div>
        <div className="flex w-[20px] flex-col items-center bg-[#f0f0f0]">
          <div className="flex h-[31px] items-center pb-[9px]"><Ic w={10} h={8}><path d="M0 7l5-5 5 5" stroke="#555" strokeWidth="2" /></Ic></div>
          <div className="h-[480px] w-full bg-[#cdcdcd]" />
          <div className="mt-[345px]"><Ic w={10} h={8}><path d="M0 1l5 5 5-5" stroke="#555" strokeWidth="2" /></Ic></div>
        </div>
      </div>
      <StatusBar />
      <Taskbar />
      <Palette />
    </div>
  );
}
